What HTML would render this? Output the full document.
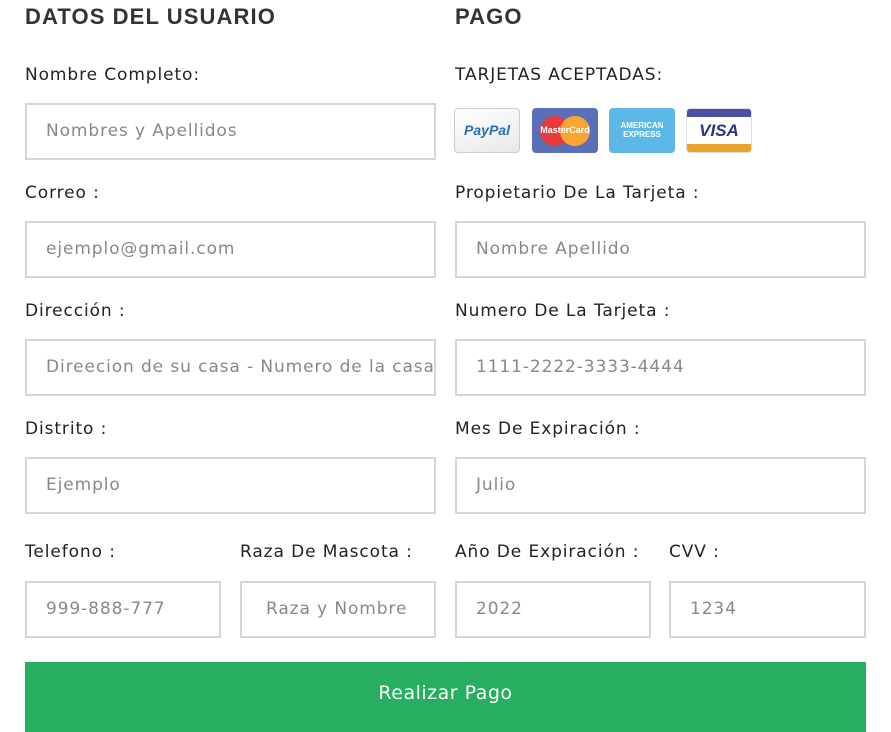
<!DOCTYPE html>
<html><head><meta charset="utf-8"><style>
*{box-sizing:border-box;margin:0;padding:0}
body{width:891px;height:724px;background:#fff;font-family:"DejaVu Sans",sans-serif;position:relative;overflow:hidden;color:#222}
.h{position:absolute;top:4px;font-size:22px;font-weight:bold;color:#333;font-family:"Liberation Sans",sans-serif;letter-spacing:1.1px}
.l{position:absolute;font-size:17px;color:#222;line-height:20px;letter-spacing:0.9px}
.i{position:absolute;height:57px;border:2px solid #d6d6d6;font-size:17px;color:#888;padding-left:19px;line-height:53px;white-space:nowrap;overflow:hidden;letter-spacing:0.9px}
.c{position:absolute;top:108px;width:66px;height:45px;border-radius:4px;overflow:hidden;letter-spacing:0}
.btn{position:absolute;left:25px;top:662px;width:841px;height:70px;background:#27ae60;color:#fff;font-size:19px;text-align:center;line-height:62px;letter-spacing:0.5px}
</style></head><body>
<div class="h" style="left:25px">DATOS DEL USUARIO</div>
<div class="h" style="left:455px">PAGO</div>

<div class="l" style="left:25px;top:65px">Nombre Completo:</div>
<div class="i" style="left:25px;top:103px;width:411px">Nombres y Apellidos</div>
<div class="l" style="left:25px;top:183px">Correo :</div>
<div class="i" style="left:25px;top:221px;width:411px">ejemplo@gmail.com</div>
<div class="l" style="left:25px;top:301px">Dirección :</div>
<div class="i" style="left:25px;top:339px;width:411px">Direecion de su casa - Numero de la casa</div>
<div class="l" style="left:25px;top:419px">Distrito :</div>
<div class="i" style="left:25px;top:457px;width:411px">Ejemplo</div>
<div class="l" style="left:25px;top:542px">Telefono :</div>
<div class="l" style="left:240px;top:542px">Raza De Mascota :</div>
<div class="i" style="left:25px;top:581px;width:196px">999-888-777</div>
<div class="i" style="left:240px;top:581px;width:196px;padding-left:24px">Raza y Nombre</div>

<div class="l" style="left:455px;top:65px">TARJETAS ACEPTADAS:</div>
<div class="c" style="left:454px;background:linear-gradient(160deg,#fff,#e8e8e8);border:1px solid #ccc;color:#2a6fb3;font:bold italic 14px 'Liberation Sans',sans-serif;text-align:center;line-height:43px">PayPal</div>
<div class="c" style="left:532px;background:#5a6fb8"><div style="position:absolute;left:8px;top:8px;width:30px;height:30px;border-radius:50%;background:#e8393b"></div><div style="position:absolute;left:28px;top:8px;width:30px;height:30px;border-radius:50%;background:#f9a533"></div><div style="position:absolute;left:0;width:66px;top:17px;color:#fff;font:bold 9px 'Liberation Sans',sans-serif;text-align:center">MasterCard</div></div>
<div class="c" style="left:609px;background:#5bb8e6;color:#fff;font:bold 8px 'Liberation Sans',sans-serif;text-align:center;padding-top:13px;line-height:9px">AMERICAN<br>EXPRESS</div>
<div class="c" style="left:686px;background:#fff;border:1px solid #ddd"><div style="height:8px;background:#4b4fa6"></div><div style="text-align:center;font:bold italic 17px 'Liberation Sans',sans-serif;color:#2a3484;line-height:27px">VISA</div><div style="position:absolute;bottom:0;left:0;right:0;height:8px;background:#e8a32d"></div></div>

<div class="l" style="left:455px;top:183px">Propietario De La Tarjeta :</div>
<div class="i" style="left:455px;top:221px;width:411px">Nombre Apellido</div>
<div class="l" style="left:455px;top:301px">Numero De La Tarjeta :</div>
<div class="i" style="left:455px;top:339px;width:411px">1111-2222-3333-4444</div>
<div class="l" style="left:455px;top:419px">Mes De Expiración :</div>
<div class="i" style="left:455px;top:457px;width:411px">Julio</div>
<div class="l" style="left:455px;top:542px">Año De Expiración :</div>
<div class="l" style="left:669px;top:542px">CVV :</div>
<div class="i" style="left:455px;top:581px;width:196px">2022</div>
<div class="i" style="left:669px;top:581px;width:197px">1234</div>

<div class="btn">Realizar Pago</div>
</body></html>
